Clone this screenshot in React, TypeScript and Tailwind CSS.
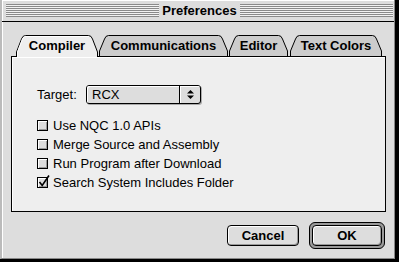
import React from "react";

const F = "font-['Liberation_Sans',Arial,sans-serif]";

function Tab({
  label,
  w,
  wClass,
  active,
  extra,
}: {
  label: string;
  w: number;
  wClass: string;
  active?: boolean;
  extra?: string;
}) {
  const h = active ? 22 : 21;
  const d = `M0.5,${h} L0.5,${h - 5} L5.5,4 Q6.6,0.5 9.5,0.5 L${w - 9.5},0.5 Q${w - 6.6},0.5 ${w - 5.5},4 L${w - 0.5},${h - 5} L${w - 0.5},${h}`;
  return (
    <div className={`relative h-[21px] shrink-0 ${wClass} ${extra ?? ""} ${active ? "z-10" : ""}`}>
      <svg
        className="absolute left-0 top-0 overflow-visible"
        width={w}
        height={h}
        viewBox={`0 0 ${w} ${h}`}
      >
        <path d={d} fill={active ? "#eeeeee" : "#cccccc"} stroke="#000" strokeWidth="1" />
        {active && (
          <path
            d={`M1.5,${h} L1.5,${h - 5} L6.5,4 Q7.4,1.5 9.5,1.5 L${w - 9.5},1.5`}
            fill="none"
            stroke="#ffffff"
            strokeWidth="1"
          />
        )}
      </svg>
      <div className="relative flex h-full items-center justify-center pt-[1px] text-[13px] font-bold text-black">
        {label}
      </div>
    </div>
  );
}

function Checkbox({ checked }: { checked?: boolean }) {
  return (
    <div className="relative h-[11px] w-[11px] shrink-0 border border-black bg-[#dddddd] shadow-[inset_1px_1px_0_#ffffff,inset_-1px_-1px_0_#999999]">
      {checked && (
        <svg className="absolute left-[0px] top-[-3px] overflow-visible" width="12" height="12" viewBox="0 0 12 12">
          <path d="M1.5,7 L4.2,10.5 L11,0.5" fill="none" stroke="#000" strokeWidth="1.6" />
        </svg>
      )}
    </div>
  );
}

function Row({ label, checked }: { label: string; checked?: boolean }) {
  return (
    <div className="flex h-[19px] items-center gap-[5px]">
      <Checkbox checked={checked} />
      <span className="text-[13px] text-black">{label}</span>
    </div>
  );
}

const stripes =
  "h-[13px] flex-1 bg-[repeating-linear-gradient(to_bottom,#8a8a8a_0px,#8a8a8a_1px,#f2f2f2_1px,#f2f2f2_2px)]";

export default function App() {
  return (
    <div className={`h-[262px] w-[399px] bg-black ${F}`}>
      <div className="flex h-[259px] w-[395px] flex-col border-b border-l-2 border-r border-[#888888] border-l-[#bbbbbb] bg-[#dddddd]">
        {/* Title bar */}
        <div className="flex h-[22px] shrink-0 items-center gap-[3px] border-b border-black pb-[1px] pl-[4px] pr-[1px] shadow-[inset_1px_1px_0_#ffffff]">
          <div className={stripes} />
          <div className="text-[13px] font-bold leading-none text-black">Preferences</div>
          <div className={stripes} />
        </div>

        {/* Content */}
        <div className="flex flex-1 flex-col pl-[9px] pt-[13px] shadow-[inset_1px_0_0_#ffffff]">
          {/* Tabs */}
          <div className="flex h-[21px] pl-[5px]">
            <Tab label="Compiler" w={82} wClass="w-[82px]" active />
            <Tab label="Communications" w={129} wClass="w-[129px]" extra="ml-[1px]" />
            <Tab label="Editor" w={59} wClass="w-[59px]" extra="ml-[1px]" />
            <Tab label="Text Colors" w={92} wClass="w-[92px]" extra="ml-[2px]" />
          </div>

          {/* Pane */}
          <div className="flex h-[156px] w-[375px] flex-col border border-black bg-[#eeeeee] pl-[25px] pt-[28px] shadow-[inset_1px_1px_0_#ffffff]">
            <div className="flex h-[19px] items-center">
              <span className="w-[49px] text-[13px] text-black">Target:</span>
              <div className="flex h-[19px] w-[115px] rounded-[3px] border border-black bg-[#dddddd] shadow-[1px_1px_0_#aaaaaa]">
                <div className="flex flex-1 items-center rounded-l-[2px] pl-[5px] text-[13px] text-black shadow-[inset_1px_1px_0_#ffffff]">
                  RCX
                </div>
                <div className="flex w-[21px] items-center justify-center rounded-r-[2px] border-l border-black shadow-[inset_1px_1px_0_#ffffff]">
                  <svg width="7" height="9" viewBox="0 0 7 9">
                    <polygon points="3.5,0 7,3.5 0,3.5" fill="#000" />
                    <polygon points="0,5.5 7,5.5 3.5,9" fill="#000" />
                  </svg>
                </div>
              </div>
            </div>

            <div className="mt-[12px] flex flex-col">
              <Row label="Use NQC 1.0 APIs" />
              <Row label="Merge Source and Assembly" />
              <Row label="Run Program after Download" />
              <Row label="Search System Includes Folder" checked />
            </div>
          </div>

          {/* Buttons */}
          <div className="mt-[10px] flex w-[375px] items-center justify-end gap-[10px] pr-[1px]">
            <button className="flex h-[21px] w-[72px] items-center justify-center rounded-[4px] border border-black bg-[#dddddd] text-[13px] font-bold text-black shadow-[inset_1px_1px_0_#ffffff,inset_-1px_-1px_0_#999999]">
              Cancel
            </button>
            <div className="flex h-[27px] w-[76px] rounded-[6px] border border-black bg-[#9a9a9a] p-[2px]">
              <button className="flex h-full w-full items-center justify-center rounded-[4px] border border-black bg-[#dddddd] text-[13px] font-bold text-black shadow-[inset_1px_1px_0_#ffffff,inset_-1px_-1px_0_#999999]">
                OK
              </button>
            </div>
          </div>
        </div>
      </div>
    </div>
  );
}
